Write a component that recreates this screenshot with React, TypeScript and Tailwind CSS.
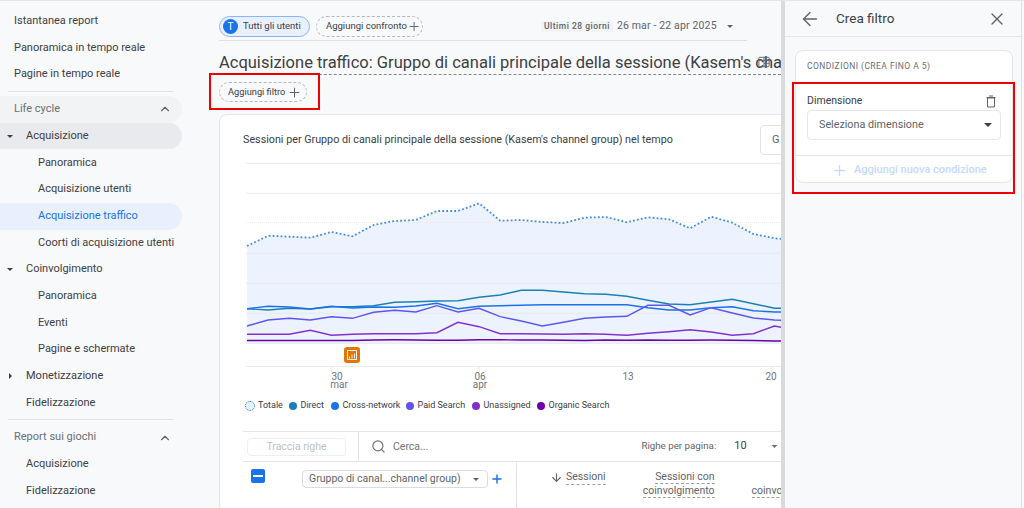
import { ArrowDown, ArrowLeft, ChevronUp, Plus, Search, X } from 'lucide-react';

const days = Array.from({ length: 28 }, (_, i) => 247 + 21.1 * i);

const series = {
  total: [246, 235.7, 236.7, 237.7, 232, 236.3, 225, 221, 220, 211, 211, 203.3, 220.7, 220, 222, 223, 217.7, 217, 222.3, 217.3, 219.3, 228.3, 216.7, 222.7, 234, 238.3, 240, 240],
  direct: [308.7, 310, 308.3, 309, 306.7, 306.7, 305.7, 302.3, 301.7, 301, 300.7, 297.3, 295, 290.3, 290.3, 292, 293.7, 294.3, 296.3, 300.3, 304, 304.7, 302, 299.3, 303.7, 308.3, 308, 309],
  cross: [308.7, 306.3, 307, 309, 306.3, 308, 307, 307.3, 306, 303.3, 308.7, 306.3, 305.7, 305.3, 304.7, 304.7, 304.7, 304.7, 304.7, 307.7, 310, 310, 307.7, 306.7, 310.7, 312, 312, 313],
  paid: [326, 320, 318.3, 320, 316.7, 318.3, 312.3, 310.3, 312, 305.7, 312, 308.3, 316.7, 321, 326, 322.3, 318.3, 317, 316.3, 305.3, 305.3, 315, 307.7, 313, 318, 320, 321, 322],
  unassigned: [334.3, 334.3, 334.3, 330.3, 335.3, 334.3, 333.7, 333.7, 333.7, 332.7, 322.3, 326.7, 333.7, 333.7, 334, 334.3, 333.7, 334.3, 335.3, 333.3, 331.7, 329.7, 332, 335.3, 333.7, 326, 330, 330],
  organic: [340.5, 340.5, 340.5, 340.5, 340.5, 340.5, 340, 339.8, 340, 340.2, 340.2, 339.8, 339.8, 340, 340, 340.2, 340.5, 340, 340.3, 340, 340.2, 340.2, 340, 340.2, 340.5, 341, 341, 341],
};

const toPoints = (ys: number[]) => ys.map((y, i) => `${days[i]},${y}`).join(' ');

function Caret({ className }: { className: string }) {
  return (
    <svg viewBox="0 0 10 5" className={className} fill="currentColor">
      <path d="M0 0h10L5 5z" />
    </svg>
  );
}

function NavRow({ label, indent, caret, className }: { label: string; indent: string; caret?: 'down' | 'right'; className?: string }) {
  return (
    <div className={`relative flex h-[26.7px] w-[182px] items-center rounded-r-full text-[11px] text-[#3c4043] ${indent} ${className ?? ''}`}>
      {caret === 'down' && <Caret className="absolute left-[7px] top-[12px] h-[3px] w-[6px] text-[#3c4043]" />}
      {caret === 'right' && (
        <svg viewBox="0 0 5 10" className="absolute left-[9px] top-[10px] h-[6px] w-[3px] text-[#3c4043]" fill="currentColor">
          <path d="M0 0l5 5-5 5z" />
        </svg>
      )}
      {label}
    </div>
  );
}

function Sidebar() {
  return (
    <div className="w-[205px] shrink-0 pt-[7px]">
      <NavRow label="Istantanea report" indent="pl-[14px]" />
      <NavRow label="Panoramica in tempo reale" indent="pl-[14px]" />
      <NavRow label="Pagine in tempo reale" indent="pl-[14px]" />
      <div className="ml-[8px] mt-[3px] mb-[4px] w-[165px] border-t border-[#e0e2e6]" />
      <div className="relative flex h-[26.7px] w-[182px] items-center justify-between rounded-r-full bg-[#f1f3f4] pl-[14px] pr-[10px] text-[11px] text-[#6a6e73]">
        Life cycle
        <ChevronUp size={14} strokeWidth={2} className="text-[#5f6368]" />
      </div>
      <NavRow label="Acquisizione" indent="pl-[26px]" caret="down" className="bg-[#e8eaed]" />
      <NavRow label="Panoramica" indent="pl-[38px]" />
      <NavRow label="Acquisizione utenti" indent="pl-[38px]" />
      <NavRow label="Acquisizione traffico" indent="pl-[38px]" className="bg-[#e8f0fe] !text-[#1a73e8]" />
      <NavRow label="Coorti di acquisizione utenti" indent="pl-[38px]" className="whitespace-nowrap" />
      <NavRow label="Coinvolgimento" indent="pl-[26px]" caret="down" />
      <NavRow label="Panoramica" indent="pl-[38px]" />
      <NavRow label="Eventi" indent="pl-[38px]" />
      <NavRow label="Pagine e schermate" indent="pl-[38px]" />
      <NavRow label="Monetizzazione" indent="pl-[26px]" caret="right" />
      <NavRow label="Fidelizzazione" indent="pl-[26px]" />
      <div className="ml-[8px] mt-[3px] mb-[4px] w-[165px] border-t border-[#e0e2e6]" />
      <div className="flex h-[26.7px] w-[182px] items-center justify-between pl-[14px] pr-[10px] text-[11px] text-[#6a6e73]">
        Report sui giochi
        <ChevronUp size={14} strokeWidth={2} className="text-[#5f6368]" />
      </div>
      <NavRow label="Acquisizione" indent="pl-[26px]" />
      <NavRow label="Fidelizzazione" indent="pl-[26px]" />
    </div>
  );
}

function Chart() {
  const grid = [163.3, 193.3, 253.3, 283.3, 313.3, 343.3];
  const ticks = [
    { x: 331.7, a: '30', ax: 337, b: 'mar', bx: 339 },
    { x: 479.3, a: '06', ax: 480, b: 'apr', bx: 480 },
    { x: 627, a: '13', ax: 628, b: '', bx: 0 },
    { x: 771, a: '20', ax: 771, b: '', bx: 0 },
  ];
  return (
    <svg viewBox="220 160 561 232" className="block h-[232px] w-[561px]" fontFamily="Roboto, sans-serif">
      <polygon points={`247,343 ${toPoints(series.total)} 817,343`} fill="#ecf3fe" />
      {grid.map((y) => (
        <line key={y} x1="246" x2="781" y1={y} y2={y} stroke="#e8eaed" strokeWidth="1" />
      ))}
      <line x1="246" x2="781" y1="222.5" y2="222.5" stroke="#e8eaed" strokeWidth="1" strokeDasharray="1 1" />
      <polyline points={toPoints(series.total)} fill="none" stroke="#3d8bea" strokeWidth="1.8" strokeDasharray="1.8 2.2" />
      <polyline points={toPoints(series.direct)} fill="none" stroke="#1b7fb8" strokeWidth="1.4" />
      <polyline points={toPoints(series.cross)} fill="none" stroke="#1a73e8" strokeWidth="1.4" />
      <polyline points={toPoints(series.paid)} fill="none" stroke="#5f55ee" strokeWidth="1.4" />
      <polyline points={toPoints(series.unassigned)} fill="none" stroke="#8430ce" strokeWidth="1.4" />
      <polyline points={toPoints(series.organic)} fill="none" stroke="#6a00a8" strokeWidth="1.4" />
      <line x1="246" x2="781" y1="366.5" y2="366.5" stroke="#e8eaed" />
      <rect x="344" y="347" width="16" height="16" rx="3" fill="#e37400" />
      <rect x="347.5" y="350.5" width="9" height="9" fill="none" stroke="#fff" strokeWidth="0.9" />
      <path d="M349.5 358.5v-2M352 358.5v-4M354.5 358.5v-5" stroke="#fff" strokeWidth="0.9" />
      {ticks.map((t) => (
        <g key={t.a} fill="#70757a" fontSize="10" textAnchor="middle">
          <line x1={t.x} x2={t.x} y1="366.5" y2="372" stroke="#e8eaed" />
          <text x={t.ax} y="379.5">{t.a}</text>
          <text x={t.bx} y="388">{t.b}</text>
        </g>
      ))}
    </svg>
  );
}

function LegendItem({ color, label, className }: { color: string; label: string; className: string }) {
  return (
    <div className={`flex items-center gap-[4px] ${className}`}>
      <span className={`h-[7.5px] w-[7.5px] rounded-full ${color}`} />
      <span>{label}</span>
    </div>
  );
}

function Main() {
  return (
    <div className="w-[576px] shrink-0 overflow-hidden">
      <div className="relative ml-[14px] w-[600px]">
        <div className="flex h-[40px] w-[528px] items-center border-b border-[#dfe1e5] pt-[12px] pb-[1px]">
          <div className="flex h-[21px] w-[91px] shrink-0 items-center gap-[5px] rounded-full border border-[#8ab4f8] bg-[#e8f0fe] pl-[3px] whitespace-nowrap text-[9.5px] text-[#3c4043]">
            <span className="flex h-[15px] w-[15px] items-center justify-center rounded-full bg-[#1a73e8] text-[10px] text-white">T</span>
            Tutti gli utenti
          </div>
          <div className="ml-[6px] flex h-[21px] w-[107px] shrink-0 items-center justify-between rounded-full border border-dashed border-[#b5b8bc] pl-[9px] pr-[1px] whitespace-nowrap text-[9.5px] text-[#3c4043]">
            Aggiungi confronto
            <Plus size={15} strokeWidth={1.6} className="text-[#5f6368]" />
          </div>
          <div className="ml-[118px] whitespace-nowrap bg-[#f1f3f4] px-[3px] text-[8.5px] font-medium leading-[11px] tracking-[0.5px] text-[#5f6368]">Ultimi 28 giorni</div>
          <div className="ml-[4px] whitespace-nowrap text-[10.5px] tracking-[0.15px] text-[#5f6368]">26 mar - 22 apr 2025</div>
          <Caret className="ml-[10px] h-[3px] w-[6px] text-[#5f6368]" />
        </div>
        <div className="mt-[11px] w-[562px] overflow-hidden border-b border-dashed border-[#80868b] pb-[1px] text-[16.5px] leading-[21px] whitespace-nowrap text-[#3c4043]">
          Acquisizione traffico: Gruppo di canali principale della sessione (Kasem's channel group)
        </div>
        <svg viewBox="0 0 14 14" className="absolute left-[539px] top-[55px] h-[12px] w-[12px] text-[#5f6368]" fill="none" stroke="currentColor" strokeWidth="1.1">
          <rect x="1" y="1.5" width="12" height="11" rx="1" />
          <path d="M7 1.5v11M1 5h12M7 8.5h6" />
        </svg>
        <div className="mt-[7px] flex h-[20px] w-[88px] items-center justify-between rounded-full border border-dashed border-[#b5b8bc] pl-[8px] pr-[4px] whitespace-nowrap text-[9.25px] text-[#3c4043]">
          Aggiungi filtro
          <Plus size={15} strokeWidth={1.6} className="text-[#5f6368]" />
        </div>

        <div className="mt-[12px] h-[400px] rounded-tl-lg border border-[#e3e5e8] bg-white">
          <div className="flex h-[45px] items-center justify-between pl-[23px] pt-[5px]">
            <div className="whitespace-nowrap text-[10.75px] text-[#3c4043]">Sessioni per Gruppo di canali principale della sessione (Kasem's channel group) nel tempo</div>
            <div className="mr-[18px] flex h-[30px] w-[40px] items-center rounded border border-[#e0e2e6] pl-[11px] text-[11px] text-[#5f6368]">G</div>
          </div>
          <Chart />
          <div className="flex h-[27px] items-center whitespace-nowrap pl-[25px] pt-[1px] text-[9px] text-[#3c4043]">
            <div className="flex w-[44px] items-center gap-[3px]">
              <span className="h-[10px] w-[10px] rounded-full border border-dotted border-[#1a73e8] bg-[#e8f0fe]" />
              Totale
            </div>
            <LegendItem color="bg-[#1b7fb8]" label="Direct" className="w-[42px]" />
            <LegendItem color="bg-[#1a73e8]" label="Cross-network" className="w-[75px]" />
            <LegendItem color="bg-[#5f55ee]" label="Paid Search" className="w-[66px]" />
            <LegendItem color="bg-[#8430ce]" label="Unassigned" className="w-[65px]" />
            <LegendItem color="bg-[#6a00a8]" label="Organic Search" className="w-[80px]" />
          </div>
          <div className="ml-[23px] mt-[12px] flex h-[31px] items-center border-y border-[#e3e5e8]">
            <div className="flex h-full w-[116px] items-center border-r border-[#e3e5e8] pl-[4px]">
              <div className="flex h-[18px] w-[99px] items-center justify-center rounded border border-[#eceef0] text-[10.5px] text-[#bdc1c6]">Traccia righe</div>
            </div>
            <Search size={15} strokeWidth={2} className="ml-[12px] text-[#70757a]" />
            <span className="ml-[7px] text-[10.5px] text-[#70757a]">Cerca...</span>
            <span className="ml-[213px] text-[9.75px] text-[#5f6368]">Righe per pagina:</span>
            <span className="ml-[18px] text-[11px] text-[#3c4043]">10</span>
            <Caret className="ml-[24px] h-[3px] w-[7px] text-[#70757a]" />
          </div>
          <div className="ml-[23px] flex items-start">
            <div className="flex h-[48px] w-[274px] shrink-0 items-start border-r border-[#e3e5e8] pt-[8px]">
              <span className="ml-[8px] -mt-[1px] flex h-[14px] w-[14px] shrink-0 items-center justify-center rounded-[2px] bg-[#1a73e8]">
                <span className="h-[2px] w-[10px] bg-white" />
              </span>
              <div className="ml-[37px] flex h-[18px] w-[186px] shrink-0 items-center justify-between rounded border border-[#dadce0] pl-[6px] pr-[8px] text-[10.5px] whitespace-nowrap text-[#5f6368]">
                Gruppo di canal...channel group)
                <Caret className="h-[3px] w-[6px] text-[#5f6368]" />
              </div>
              <Plus size={14} strokeWidth={2.5} className="ml-[2px] mt-[2px] shrink-0 text-[#1a73e8]" />
            </div>
            <div className="flex pt-[8px] text-[10.5px] leading-[14px] text-[#5f6368]">
              <ArrowDown size={13} className="ml-[33px] mt-[1px] text-[#5f6368]" />
              <span className="ml-[3px] h-[15px] border-b border-dashed border-[#9aa0a6]">Sessioni</span>
              <div className="ml-[37px] w-[72px] shrink-0 text-right">
                <span className="border-b border-dashed border-[#9aa0a6]">Sessioni con</span>
                <br />
                <span className="border-b border-dashed border-[#9aa0a6]">coinvolgimento</span>
              </div>
              <div className="ml-[37px] pt-[14px]">
                <span className="border-b border-dashed border-[#9aa0a6]">coinvolgimento</span>
              </div>
            </div>
          </div>
        </div>
      </div>
    </div>
  );
}

function FilterPanel() {
  return (
    <div className="w-[237px] shrink-0 border-r border-[#dfe1e5]">
      <div className="flex h-[36px] items-center border-b border-[#e3e5e8] text-[#5f6368]">
        <ArrowLeft size={22} strokeWidth={1.5} className="ml-[14px]" />
        <span className="ml-[15px] text-[13.5px] text-[#3c4043]">Crea filtro</span>
        <X size={20} strokeWidth={1.6} className="ml-auto mr-[14px]" />
      </div>
      <div className="ml-[10px] mt-[13px] h-[133px] w-[218px] rounded-lg border border-[#e3e5e8] bg-white">
        <div className="pl-[11px] pt-[10px] text-[8.5px] leading-[11px] tracking-[0.45px] text-[#6a6e73]">CONDIZIONI (CREA FINO A 5)</div>
        <div className="flex items-center justify-between pl-[11px] pr-[15px] pt-[22px] text-[10.5px] leading-[14px] text-[#3c4043]">
          Dimensione
          <svg viewBox="0 0 12 13" className="h-[13px] w-[12px] text-[#5f6368]" fill="none" stroke="currentColor" strokeWidth="1">
            <path d="M2.5 3h7v9h-7zM1.5 2.5h9M4 1h4" />
          </svg>
        </div>
        <div className="ml-[11px] mt-[2px] flex h-[30px] w-[194px] items-center justify-between rounded border border-[#e6e8eb] pl-[11px] pr-[8px] text-[10.75px] text-[#5f6368]">
          Seleziona dimensione
          <Caret className="h-[4px] w-[8px] text-[#3c4043]" />
        </div>
        <div className="mt-[15px] flex h-[27px] items-center border-t border-[#e3e5e8] pl-[34.5px] pt-[2px] text-[11px] font-medium text-[#c6dafa]">
          <Plus size={17} strokeWidth={1.8} />
          <span className="ml-[6.5px] whitespace-nowrap">Aggiungi nuova condizione</span>
        </div>
      </div>
    </div>
  );
}

export default function App() {
  return (
    <div className="relative flex h-[508px] w-[1024px] overflow-hidden border-t border-[#e3e5e8] bg-[#f8f9fb] font-[Roboto,sans-serif]">
      <Sidebar />
      <Main />
      <div className="w-[4px] shrink-0 bg-[#d9dadc]" />
      <FilterPanel />

      <div className="absolute left-[209px] top-[72px] h-[37px] w-[111px] border-2 border-[#f00000]" />
      <div className="absolute left-[792px] top-[81px] h-[112px] w-[223px] border-2 border-[#f00000]" />
    </div>
  );
}
